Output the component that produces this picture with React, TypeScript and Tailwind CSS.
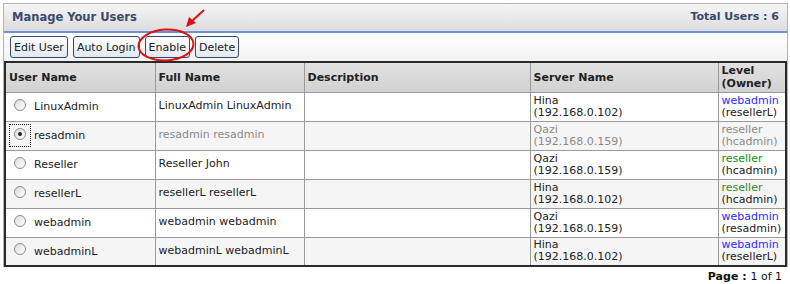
import React from "react";

type Row = {
  user: string;
  full: string;
  server: string;
  ip: string;
  level: string;
  owner: string;
  levelColor: string;
  disabled?: boolean;
  checked?: boolean;
};

const rows: Row[] = [
  { user: "LinuxAdmin", full: "LinuxAdmin LinuxAdmin", server: "Hina", ip: "(192.168.0.102)", level: "webadmin", owner: "(resellerL)", levelColor: "text-[#2b2bff]" },
  { user: "resadmin", full: "resadmin resadmin", server: "Qazi", ip: "(192.168.0.159)", level: "reseller", owner: "(hcadmin)", levelColor: "text-[#8a8a8a]", disabled: true, checked: true },
  { user: "Reseller", full: "Reseller John", server: "Qazi", ip: "(192.168.0.159)", level: "reseller", owner: "(hcadmin)", levelColor: "text-[#109010]" },
  { user: "resellerL", full: "resellerL resellerL", server: "Hina", ip: "(192.168.0.102)", level: "reseller", owner: "(hcadmin)", levelColor: "text-[#2e8a2e]" },
  { user: "webadmin", full: "webadmin webadmin", server: "Qazi", ip: "(192.168.0.159)", level: "webadmin", owner: "(resadmin)", levelColor: "text-[#2b2bff]" },
  { user: "webadminL", full: "webadminL webadminL", server: "Hina", ip: "(192.168.0.102)", level: "webadmin", owner: "(resellerL)", levelColor: "text-[#2b2bff]" },
];

function Radio({ checked }: { checked?: boolean }) {
  return (
    <span className="inline-flex w-[12px] h-[12px] rounded-full border border-[#8c8c8c] bg-gradient-to-br from-[#dcdcdc] to-white items-center justify-center shrink-0">
      {checked && <span className="w-[4px] h-[4px] rounded-full bg-[#222]" />}
    </span>
  );
}

function Btn({ children }: { children: React.ReactNode }) {
  return (
    <button className="h-[22px] px-[3px] rounded-[3px] border border-[#34496b] bg-gradient-to-b from-white to-[#e4e9ef] text-[11px] text-[#222] leading-none">
      {children}
    </button>
  );
}

export default function App() {
  return (
    <div
      className="relative w-[790px] h-[284px] bg-white pt-[3px] pl-[3px] overflow-hidden"
      style={{ fontFamily: '"DejaVu Sans", Verdana, sans-serif' }}
    >
      <div className="w-[785px] border border-[#b4b4b4] border-b-0">
        <div className="h-[27px] flex items-center justify-between pl-[8px] pr-[8px] bg-gradient-to-b from-[#f6f6f6] to-[#dcdcdc]">
          <span className="text-[11.5px] font-bold text-[#3a4a6e]">Manage Your Users</span>
          <span className="text-[11px] font-bold text-[#3a4a6e]">Total Users : 6</span>
        </div>
        <div className="h-[2px] bg-[#6b8fe0]" />
        <div className="h-[28px] flex items-center gap-[5px] pl-[6px] bg-gradient-to-b from-white to-[#f2f2f2]">
          <Btn>Edit User</Btn>
          <Btn>Auto Login</Btn>
          <Btn>Enable</Btn>
          <Btn>Delete</Btn>
        </div>
        <table className="table-fixed border-collapse border-2 border-[#2a2a2a] w-[783px] text-[11px] text-[#222]">
          <colgroup>
            <col className="w-[150px]" />
            <col className="w-[149px]" />
            <col className="w-[226px]" />
            <col className="w-[188px]" />
            <col />
          </colgroup>
          <thead>
            <tr className="h-[30px] bg-gradient-to-b from-[#e2e2e2] to-[#d2d2d2]">
              <th className="border border-[#9a9a9a] text-left font-bold px-[3px] leading-[13px]">User Name</th>
              <th className="border border-[#9a9a9a] text-left font-bold px-[3px] leading-[13px]">Full Name</th>
              <th className="border border-[#9a9a9a] text-left font-bold px-[3px] leading-[13px]">Description</th>
              <th className="border border-[#9a9a9a] text-left font-bold px-[3px] leading-[13px]">Server Name</th>
              <th className="border border-[#9a9a9a] text-left font-bold px-[3px] leading-[13px]">
                Level
                <br />
                (Owner)
              </th>
            </tr>
          </thead>
          <tbody>
            {rows.map((r, i) => {
              const sub = r.disabled ? "text-[#8a8a8a]" : "text-[#222]";
              return (
                <tr key={r.user} className={`h-[29px] ${i % 2 === 1 ? "bg-[#f5f5f5]" : "bg-white"}`}>
                  <td className="border border-[#9a9a9a] px-[3px]">
                    <div className="flex items-center">
                      <span
                        className={`inline-flex items-center justify-center w-[22px] h-[23px] ${
                          r.checked ? "outline-1 outline-dotted outline-[#222] -outline-offset-1" : ""
                        }`}
                      >
                        <span className="-mt-[4px] flex">
                          <Radio checked={r.checked} />
                        </span>
                      </span>
                      <span className="ml-[3px] mt-[2px]">{r.user}</span>
                    </div>
                  </td>
                  <td className={`border border-[#9a9a9a] px-[3px] ${sub}`}>{r.full}</td>
                  <td className="border border-[#9a9a9a] px-[3px]"></td>
                  <td className={`border border-[#9a9a9a] px-[3px] leading-[12px] ${sub}`}>
                    {r.server}
                    <br />
                    {r.ip}
                  </td>
                  <td className="border border-[#9a9a9a] px-[3px] leading-[12px]">
                    <span className={r.levelColor}>{r.level}</span>
                    <br />
                    <span className={sub}>{r.owner}</span>
                  </td>
                </tr>
              );
            })}
          </tbody>
        </table>
      </div>
      <div className="w-[779px] text-right text-[11px] leading-[13px] text-[#111] mt-[3px]">
        <span className="font-bold">Page : </span>1 of 1
      </div>

      <svg className="absolute left-0 top-0 pointer-events-none" width="790" height="284">
        <ellipse cx="166" cy="45" rx="27.5" ry="15.5" fill="none" stroke="#e01010" strokeWidth="2" transform="rotate(-3 166 45)" />
        <line x1="204" y1="10" x2="192" y2="21" stroke="#e01010" strokeWidth="2" />
        <polygon points="186,27 189,17 196,23" fill="#e01010" />
      </svg>
    </div>
  );
}
